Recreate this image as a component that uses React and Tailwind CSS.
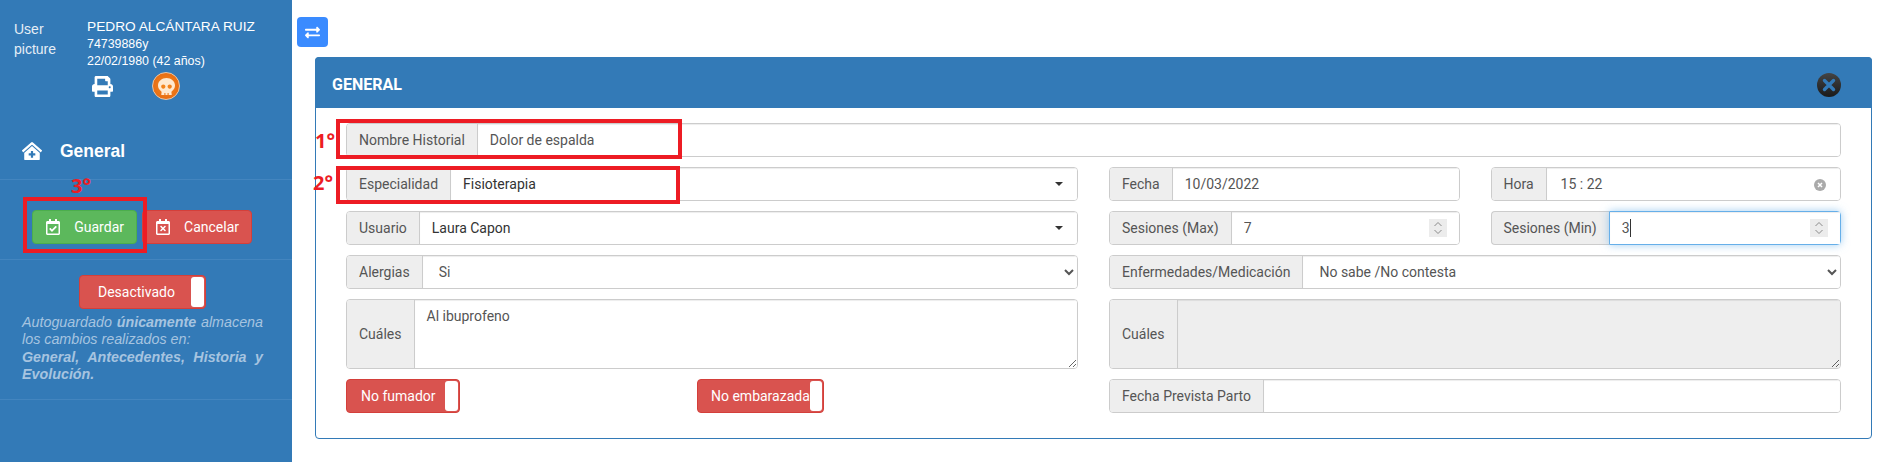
import React from 'react';
import { FaClinicMedical, FaExchangeAlt, FaPrint, FaRegCalendarCheck, FaRegCalendarTimes, FaSkull } from 'react-icons/fa';

const inputBase = 'flex-1 min-w-0 h-full px-3 text-[14px] text-[#555] outline-none shadow-[inset_0_1px_1px_rgba(0,0,0,0.075)]';
const inputClass = `${inputBase} bg-white`;

const Field = ({ label, tall, className = '', children }) => (
  <div className={`flex ${tall ? 'h-[70px]' : 'h-[34px]'} border border-[#ccc] rounded overflow-hidden ${className}`}>
    <span className="flex items-center px-3 bg-[#eee] border-r border-[#ccc] text-[14px] text-[#555] whitespace-nowrap">{label}</span>
    {children}
  </div>
);

const Select2 = ({ value }) => (
  <div className="flex flex-1 items-center justify-between bg-white pl-3 pr-[14px] text-[14px] text-[#333] shadow-[inset_0_1px_1px_rgba(0,0,0,0.075)]">
    <span>{value}</span>
    <span className="w-0 h-0 border-x-4 border-x-transparent border-t-4 border-t-[#333]" />
  </div>
);

const Spinner = () => (
  <svg width="18" height="18" viewBox="0 0 18 18" className="absolute right-3 top-[7px] bg-[#ececec]" fill="none" stroke="#8a8a8a" strokeWidth="1">
    <path d="M5.5 7l3.5-3.5L12.5 7M5.5 11l3.5 3.5L12.5 11" />
  </svg>
);

const Toggle = ({ label, width, sidePad }) => (
  <div className={`flex items-center justify-between h-[34px] ${width} bg-[#d9534f] border border-[#d43f3a] rounded pr-px text-[14px] text-white ${sidePad}`}>
    <span className="whitespace-nowrap">{label}</span>
    <span className="w-[13px] h-[30px] bg-white rounded-[3px]" />
  </div>
);

const Note = ({ text, className }) => (
  <span className={`absolute font-['Open_Sans',sans-serif] font-bold text-[20px] leading-none text-[#ed1c24] ${className}`}>{text}</span>
);

const Sidebar = () => (
  <aside className="w-[292px] h-[462px] shrink-0 bg-[#337ab7] text-white font-['Liberation_Sans',sans-serif]">
    <div className="flex pt-[18px] pl-[14px]">
      <div className="w-[73px] pt-px text-[14px] leading-5 text-[#e6eef6]">User picture</div>
      <div>
        <div className="text-[13.7px] leading-[18px]">PEDRO ALCÁNTARA RUIZ</div>
        <div className="text-[12.4px] leading-[17px]">74739886y</div>
        <div className="text-[12.4px] leading-[17px]">22/02/1980 (42 años)</div>
        <div className="flex items-center mt-[2px] pl-[5px] gap-[39px]">
          <FaPrint className="text-white text-[21px]" />
          <span className="flex items-center justify-center w-7 h-7 rounded-full border border-[#e8c8a8] bg-[radial-gradient(circle,#f58a1f,#e2620f)]">
            <FaSkull className="text-[#ffe9cf] text-[17px]" />
          </span>
        </div>
      </div>
    </div>
    <div className="flex items-center h-[57px] mt-[23px] pl-[22px] gap-[18px] border-b border-[#4385bf]">
      <FaClinicMedical className="text-[20px]" />
      <span className="text-[17.5px] font-bold">General</span>
    </div>
    <div className="flex h-[80px] pt-[30px] pl-[32px] gap-[5px] border-b border-[#4385bf] font-['Roboto',sans-serif]">
      <button className="flex items-center justify-between h-[34px] w-[105px] pl-[12px] pr-[12px] rounded bg-[#5cb85c] border border-[#4cae4c] text-[14px]">
        <FaRegCalendarCheck className="text-[16px]" />
        Guardar
      </button>
      <button className="flex items-center justify-between h-[34px] w-[110px] pl-[12px] pr-[12px] rounded bg-[#d9534f] border border-[#d43f3a] text-[14px]">
        <FaRegCalendarTimes className="text-[16px]" />
        Cancelar
      </button>
    </div>
    <div className="h-[140px] border-b border-[#4385bf] pt-[15px] px-[22px]">
      <div className="pl-[57px] font-['Roboto',sans-serif]">
        <Toggle label="Desactivado" width="w-[127px]" sidePad="pl-[18px]" />
      </div>
      <div className="mt-[5px] w-[241px] text-[14.3px] leading-[17.3px] italic text-[#a6c4e0]">
        <div className="[text-align-last:justify]">Autoguardado <b>únicamente</b> almacena</div>
        <div>los cambios realizados en:</div>
        <div className="font-bold [text-align-last:justify]">General, Antecedentes, Historia y</div>
        <div className="font-bold">Evolución.</div>
      </div>
    </div>
  </aside>
);

const Panel = () => (
  <section className="mt-[10px] ml-[23px] mr-[12px] h-[382px] border border-[#337ab7] rounded">
    <header className="flex items-center justify-between h-[51px] -mt-px -mx-px pt-[5px] pl-[17px] pr-[31px] bg-[#337ab7] rounded-t">
      <h2 className="text-[16px] font-bold text-white">GENERAL</h2>
      <svg width="24" height="24" viewBox="0 0 24 24">
        <defs>
          <linearGradient id="closeFill" x1="0" y1="0" x2="0" y2="1">
            <stop offset="0" stopColor="#444" />
            <stop offset="1" stopColor="#1a1a1a" />
          </linearGradient>
        </defs>
        <circle cx="12" cy="12" r="12" fill="url(#closeFill)" />
        <path d="M7.5 7.5l9 9M16.5 7.5l-9 9" stroke="#337ab7" strokeWidth="3.4" strokeLinecap="round" />
      </svg>
    </header>
    <div className="flex flex-col gap-[10px] pt-[15px] px-[30px]">
      <Field label="Nombre Historial">
        <input readOnly value="Dolor de espalda" className={inputClass} />
      </Field>
      <div className="grid grid-cols-4 gap-x-[31px] gap-y-[10px]">
        <Field label="Especialidad" className="col-span-2"><Select2 value="Fisioterapia" /></Field>
        <Field label="Fecha"><input readOnly value="10/03/2022" className={inputClass} /></Field>
        <Field label="Hora">
          <div className="relative flex-1 min-w-0">
            <input readOnly value="15 : 22" className={`${inputClass} w-full !pl-[14px]`} />
            <svg width="12" height="12" viewBox="0 0 12 12" className="absolute right-[14px] top-[11px]">
              <circle cx="6" cy="6" r="6" fill="#aaa" />
              <path d="M4 4l4 4M8 4l-4 4" stroke="#fff" strokeWidth="1.5" />
            </svg>
          </div>
        </Field>
        <Field label="Usuario" className="col-span-2"><Select2 value="Laura Capon" /></Field>
        <Field label="Sesiones (Max)">
          <div className="relative flex-1 min-w-0">
            <input readOnly value="7" className={`${inputClass} w-full`} />
            <Spinner />
          </div>
        </Field>
        <div className="flex h-[34px]">
          <span className="flex items-center px-3 bg-[#eee] border border-r-0 border-[#ccc] rounded-l text-[14px] text-[#555] whitespace-nowrap">Sesiones (Min)</span>
          <div className="relative flex-1 min-w-0 border border-[#66afe9] rounded-r bg-white shadow-[0_0_8px_rgba(102,175,233,0.6)]">
            <input readOnly value="3" className={`${inputClass} w-full`} />
            <span className="absolute left-[20px] top-[7px] w-px h-[18px] bg-[#333]" />
            <Spinner />
          </div>
        </div>
        <Field label="Alergias" className="col-span-2">
          <select defaultValue="Si" className={inputClass}><option>Si</option></select>
        </Field>
        <Field label="Enfermedades/Medicación" className="col-span-2">
          <select defaultValue="No sabe /No contesta" className={inputClass}><option>No sabe /No contesta</option></select>
        </Field>
        <Field label="Cuáles" tall className="col-span-2">
          <textarea readOnly value="Al ibuprofeno" className={`${inputClass} py-[6px] resize`} />
        </Field>
        <Field label="Cuáles" tall className="col-span-2">
          <textarea disabled className={`${inputBase} bg-[#eee] resize`} />
        </Field>
        <div className="col-span-2 flex">
          <div className="w-[351px]"><Toggle label="No fumador" width="w-[114px]" sidePad="pl-[14px]" /></div>
          <Toggle label="No embarazada" width="w-[127px]" sidePad="pl-[13px]" />
        </div>
        <Field label="Fecha Prevista Parto" className="col-span-2">
          <input readOnly className={inputClass} />
        </Field>
      </div>
    </div>
  </section>
);

const App = () => (
  <div className="relative flex w-[1884px] h-[462px] overflow-hidden bg-white font-['Roboto',sans-serif]">
    <Sidebar />
    <main className="flex-1 min-w-0 pt-[17px]">
      <button className="flex items-center justify-center w-[31px] h-[30px] ml-[5px] rounded bg-[#3a8bff] text-white text-[15px]">
        <FaExchangeAlt />
      </button>
      <Panel />
    </main>
    {/* annotations drawn over the screenshot */}
    <div className="absolute left-[336px] top-[119px] w-[346px] h-[40px] border-[4px] border-[#ed1c24]" />
    <div className="absolute left-[336px] top-[166px] w-[344px] h-[38px] border-[4px] border-[#ed1c24]" />
    <div className="absolute left-[23px] top-[197px] w-[124px] h-[56px] border-[4px] border-[#ed1c24]" />
    <Note text="1°" className="left-[315px] top-[131px]" />
    <Note text="2°" className="left-[313px] top-[173px]" />
    <Note text="3°" className="left-[71px] top-[176px]" />
  </div>
);

export default App;
